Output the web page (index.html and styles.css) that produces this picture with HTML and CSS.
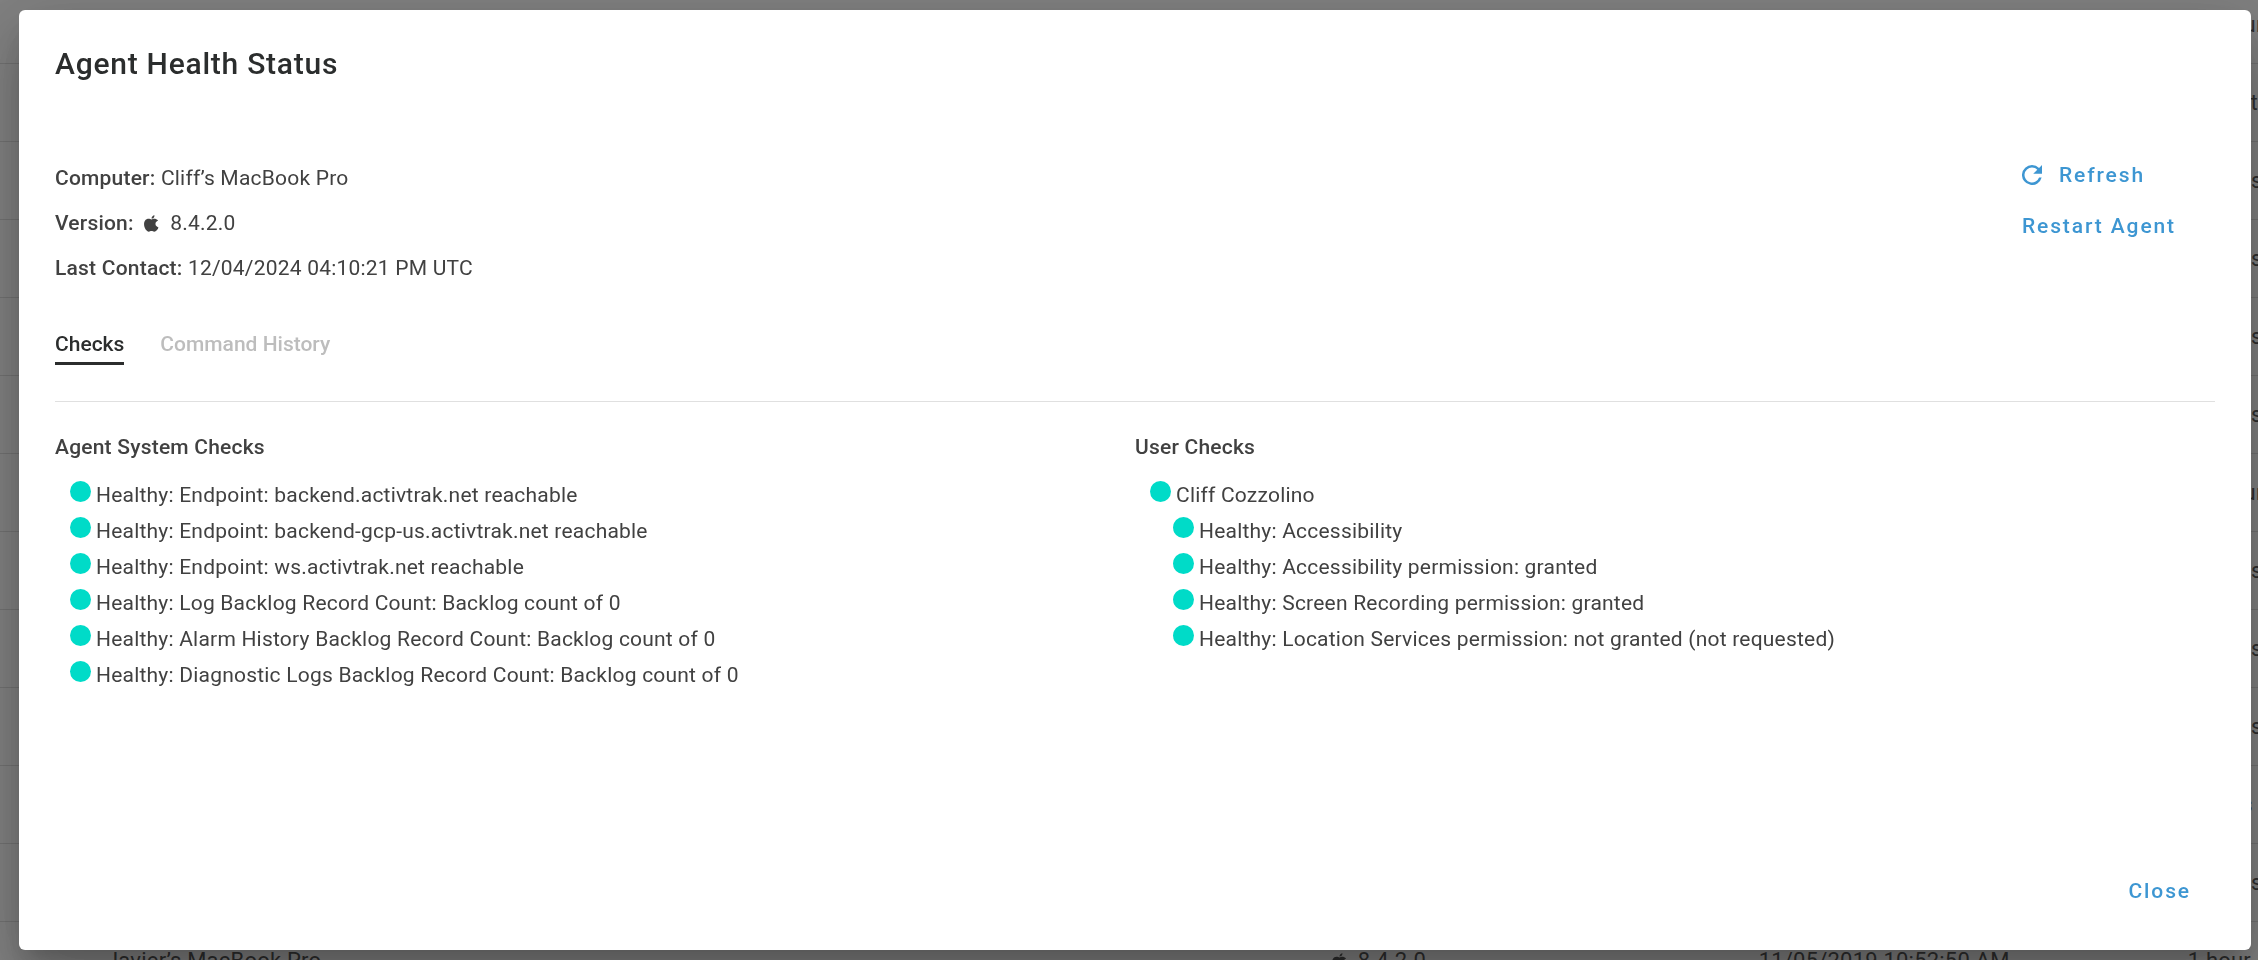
FILE: index.html
```html
<!DOCTYPE html>
<html lang="en">
<head>
    <meta charset="UTF-8">
    <meta name="viewport" content="width=device-width, initial-scale=1.0">
    <title>Agent Health Status</title>
    <link rel="stylesheet" href="styles.css">
</head>
<body>
    <svg class="sprite" aria-hidden="true">
        <symbol id="apple" viewBox="0 0 24 24">
            <path d="M17.6 12.700c0-2.300 1.300-3.700 3.700-4.800-1.500-1.900-3.500-2.600-5.400-2.600-1.600 0-2.800.9-3.900.9-1.200 0-2.500-.9-4.200-.9C4.200 5.300 1.500 8.300 1.500 12.900 1.500 18.200 5.300 23.500 8.200 23.500c1.400 0 2.100-.8 3.800-.8s2.300.8 3.900.8c2.600 0 5-3.200 6-6-2.500-.8-4.300-2.500-4.300-4.800zM12 5C11.800 2.700 14 .4 16.200.2 16.500 2.800 14.500 5 12 5z"/>
        </symbol>
    </svg>

    <table class="agents">
        <tbody>
            <tr><td></td><td></td><td></td><td>10 hours ago</td></tr>
            <tr><td></td><td></td><td></td><td>1 month ago</td></tr>
            <tr><td></td><td></td><td></td><td>2 hours ago</td></tr>
            <tr><td></td><td></td><td></td><td>2 hours ago</td></tr>
            <tr><td></td><td></td><td></td><td>2 hours ago</td></tr>
            <tr><td></td><td></td><td></td><td>2 hours ago</td></tr>
            <tr><td></td><td></td><td></td><td>10 hours ago</td></tr>
            <tr><td></td><td></td><td></td><td>2 hours ago</td></tr>
            <tr><td></td><td></td><td></td><td>2 hours ago</td></tr>
            <tr><td></td><td></td><td></td><td>2 hours ago</td></tr>
            <tr><td></td><td></td><td></td><td>2 days ago</td></tr>
            <tr><td></td><td></td><td></td><td>2 hours ago</td></tr>
            <tr>
                <td>Javier’s MacBook Pro</td>
                <td><svg class="apple"><use href="#apple"/></svg>8.4.2.0</td>
                <td>11/05/2019 10:52:50 AM</td>
                <td>1 hour ago</td>
            </tr>
        </tbody>
    </table>

    <div class="overlay">
        <div class="dialog" role="dialog" aria-labelledby="dialog-title">
            <h1 id="dialog-title">Agent Health Status</h1>
            <div class="summary">
                <div class="details">
                    <p><strong>Computer:</strong> Cliff’s MacBook Pro</p>
                    <p><strong>Version:</strong> <svg class="apple"><use href="#apple"/></svg>8.4.2.0</p>
                    <p><strong>Last Contact:</strong> 12/04/2024 04:10:21 PM UTC</p>
                </div>
                <div class="actions">
                    <button class="btn" type="button">
                        <svg class="refresh" viewBox="4 4 16 16"><path d="M17.650 6.350A7.958 7.958 0 0 0 12 4a8 8 0 1 0 7.730 10h-2.080A6 6 0 1 1 12 6c1.660 0 3.140.69 4.220 1.780L13 11h7V4z"/></svg>
                        Refresh
                    </button>
                    <button class="btn" type="button">Restart Agent</button>
                </div>
            </div>
            <div class="tabs" role="tablist">
                <button class="tab active" type="button" role="tab" aria-selected="true">Checks</button>
                <button class="tab" type="button" role="tab" aria-selected="false">Command History</button>
            </div>
            <div class="checks">
                <section>
                    <h2>Agent System Checks</h2>
                    <ul>
                        <li><span class="dot"></span>Healthy: Endpoint: backend.activtrak.net reachable</li>
                        <li><span class="dot"></span>Healthy: Endpoint: backend-gcp-us.activtrak.net reachable</li>
                        <li><span class="dot"></span>Healthy: Endpoint: ws.activtrak.net reachable</li>
                        <li><span class="dot"></span>Healthy: Log Backlog Record Count: Backlog count of 0</li>
                        <li><span class="dot"></span>Healthy: Alarm History Backlog Record Count: Backlog count of 0</li>
                        <li><span class="dot"></span>Healthy: Diagnostic Logs Backlog Record Count: Backlog count of 0</li>
                    </ul>
                </section>
                <section>
                    <h2>User Checks</h2>
                    <ul>
                        <li><span class="dot"></span>Cliff Cozzolino
                            <ul class="nested">
                                <li><span class="dot"></span>Healthy: Accessibility</li>
                                <li><span class="dot"></span>Healthy: Accessibility permission: granted</li>
                                <li><span class="dot"></span>Healthy: Screen Recording permission: granted</li>
                                <li><span class="dot"></span>Healthy: Location Services permission: not granted (not requested)</li>
                            </ul>
                        </li>
                    </ul>
                </section>
            </div>
            <div class="footer">
                <button class="btn" type="button">Close</button>
            </div>
        </div>
    </div>
</body>
</html>
```

FILE: styles.css
```css
* {
    box-sizing: border-box;
}
body {
    margin: 0;
    height: 100vh;
    overflow: hidden;
    background-color: #fff;
    color: #414141;
    font-family: Roboto, sans-serif;
    font-size: 21px;
    line-height: 36px;
    letter-spacing: 0.01em;
}
h1, h2, p, ul {
    margin: 0;
    padding: 0;
}
.sprite {
    display: none;
}
.agents {
    width: 100%;
    margin-top: -15px;
    border-collapse: collapse;
    table-layout: fixed;
    white-space: nowrap;
    font-size: 22px;
}
.agents td {
    height: 78px;
    padding: 2px 0 0 20px;
    border-bottom: 1px solid #dcdcdc;
}
.agents td:first-child {
    width: 58%;
    padding-left: 106px;
}
.agents td:nth-child(2) {
    width: 19%;
    padding-left: 17px;
}
.agents td:nth-child(3) {
    width: 19%;
}
.apple {
    width: 17px;
    height: 17px;
    margin: 0 10px 0 4px;
    vertical-align: -2px;
    fill: currentColor;
}
.overlay {
    position: fixed;
    inset: 0;
    display: flex;
    padding: 10px 7px 10px 19px;
    background-color: rgba(33, 33, 33, 0.57);
}
.dialog {
    flex: 1;
    display: flex;
    flex-direction: column;
    padding: 36px 36px 41px;
    border-radius: 6px;
    background-color: #fff;
    box-shadow: 0 16px 22px -10px rgba(0, 0, 0, 0.2),
                0 36px 57px 4px rgba(0, 0, 0, 0.14),
                0 14px 69px 12px rgba(0, 0, 0, 0.12);
}
h1 {
    color: #2b2d2d;
    font-size: 30px;
    font-weight: 500;
    line-height: 36px;
    letter-spacing: 0.025em;
}
.summary {
    display: flex;
    justify-content: space-between;
    margin-top: 67px;
}
.details {
    padding-top: 7px;
    line-height: 45px;
}
.details strong, h2 {
    font-weight: 500;
}
.actions {
    display: flex;
    flex-direction: column;
    align-items: flex-start;
    padding-right: 39px;
}
.btn {
    display: flex;
    align-items: center;
    gap: 17px;
    height: 51px;
    padding: 0;
    border: none;
    background: none;
    color: #3d96d2;
    font: 500 21px Roboto, sans-serif;
    letter-spacing: 0.09em;
    cursor: pointer;
}
.refresh {
    width: 20px;
    height: 20px;
    fill: currentColor;
}
.tabs {
    display: flex;
    gap: 36px;
    padding: 38px 0 36px;
    border-bottom: 1px solid #e0e0e0;
}
.tab {
    padding: 0 0 3px;
    border: none;
    border-bottom: 3px solid transparent;
    background: none;
    color: #bdbdbd;
    font: 500 21px/30px Roboto, sans-serif;
    cursor: pointer;
}
.tab.active {
    color: #2b2d2d;
    border-color: #2b2d2d;
}
.checks {
    display: grid;
    grid-template-columns: 1fr 1fr;
    margin-top: 27px;
}
h2 {
    margin-bottom: 12px;
    font-size: 21px;
}
ul {
    padding-left: 15px;
    list-style: none;
}
.nested {
    padding-left: 23px;
}
.dot {
    display: inline-block;
    width: 21px;
    height: 21px;
    margin-right: 5px;
    border-radius: 50%;
    background-color: #00dbc8;
    vertical-align: baseline;
}
.footer {
    display: flex;
    justify-content: flex-end;
    margin-top: auto;
    padding-right: 24px;
}
.footer .btn {
    height: 36px;
}
```
